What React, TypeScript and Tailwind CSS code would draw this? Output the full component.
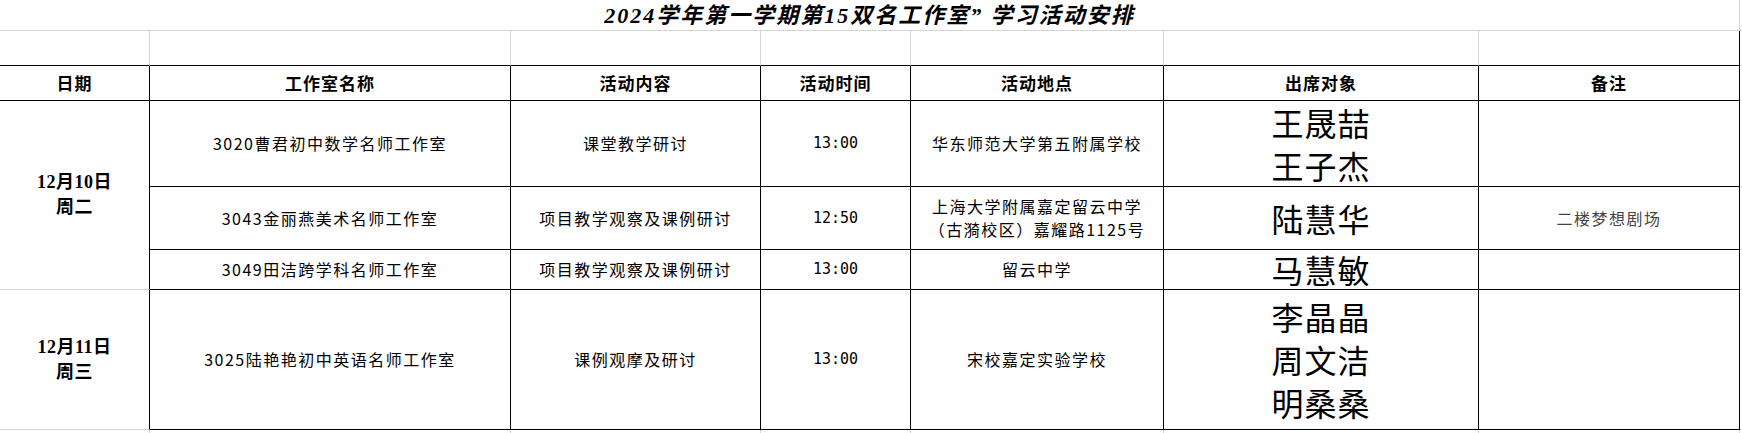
type Row = {
  name: string;
  content: string;
  time: string;
  place: string[];
  people: string[];
  note?: string;
};

const day1: Row[] = [
  {
    name: "3020曹君初中数学名师工作室",
    content: "课堂教学研讨",
    time: "13:00",
    place: ["华东师范大学第五附属学校"],
    people: ["王晟喆", "王子杰"],
  },
  {
    name: "3043金丽燕美术名师工作室",
    content: "项目教学观察及课例研讨",
    time: "12:50",
    place: ["上海大学附属嘉定留云中学", "（古漪校区）嘉耀路1125号"],
    people: ["陆慧华"],
    note: "二楼梦想剧场",
  },
  {
    name: "3049田洁跨学科名师工作室",
    content: "项目教学观察及课例研讨",
    time: "13:00",
    place: ["留云中学"],
    people: ["马慧敏"],
  },
];

const day2: Row = {
  name: "3025陆艳艳初中英语名师工作室",
  content: "课例观摩及研讨",
  time: "13:00",
  place: ["宋校嘉定实验学校"],
  people: ["李晶晶", "周文洁", "明桑桑"],
};

const headers = ["日期", "工作室名称", "活动内容", "活动时间", "活动地点", "出席对象", "备注"];

const cell = "flex flex-col items-center justify-center text-center border-r border-b border-black";
const body = "text-[16px] tracking-[1.5px] leading-[23px]";

function DataCells({ row }: { row: Row }) {
  return (
    <>
      <div className={`${cell} ${body}`}>{row.name}</div>
      <div className={`${cell} ${body}`}>{row.content}</div>
      <div className={`${cell} text-[15px] font-['DejaVu_Sans_Mono',monospace]`}>{row.time}</div>
      <div className={`${cell} ${body}`}>
        {row.place.map((p) => (
          <span key={p}>{p}</span>
        ))}
      </div>
      <div className={`${cell} text-[32px] leading-[43px] tracking-[1px]`}>
        {row.people.map((p) => (
          <span key={p}>{p}</span>
        ))}
      </div>
      <div className={`${cell} text-[16px] tracking-[1.5px] text-[#444]`}>{row.note}</div>
      <div className="border-b border-[#d4d4d4]" />
    </>
  );
}

export default function App() {
  return (
    <div className="w-[1742px] h-[433px] overflow-hidden bg-white text-black font-['Noto_Sans_CJK_SC',sans-serif]">
      <div className="grid grid-cols-[150px_361px_250px_150px_253px_315px_261px_2px] grid-rows-[31px_35px_35px_86px_63px_40px_140px_3px]">
        {/* title */}
        <div className="col-span-7 flex items-center justify-center border-r border-b border-[#d4d4d4] text-[22px] font-bold italic tracking-[2px] font-['Liberation_Serif','Noto_Sans_CJK_SC',serif]">
          2024学年第一学期第15双名工作室” 学习活动安排
        </div>
        <div className="border-b border-[#d4d4d4]" />

        {/* empty row */}
        <div className="border-r border-b border-r-[#d4d4d4] border-b-black" />
        <div className="border-r border-b border-r-[#d4d4d4] border-b-black" />
        <div className="border-r border-b border-r-[#d4d4d4] border-b-black" />
        <div className="border-r border-b border-r-[#d4d4d4] border-b-black" />
        <div className="border-r border-b border-r-[#d4d4d4] border-b-black" />
        <div className="border-r border-b border-r-[#d4d4d4] border-b-black" />
        <div className="border-r border-b border-black" />
        <div className="border-b border-[#d4d4d4]" />

        {/* header */}
        {headers.map((h) => (
          <div key={h} className={`${cell} text-[17px] font-bold tracking-[1px]`}>
            {h}
          </div>
        ))}
        <div className="border-b border-[#d4d4d4]" />

        {/* 12月10日 */}
        <div className="row-span-3 flex flex-col items-center justify-center border-r border-b border-r-black border-b-[#d4d4d4] text-[18px] font-bold leading-[25px] tracking-[0.5px] font-['Liberation_Serif','Noto_Sans_CJK_SC',serif]">
          <span>12月10日</span>
          <span>周二</span>
        </div>
        {day1.map((r) => (
          <DataCells key={r.name} row={r} />
        ))}

        {/* 12月11日 */}
        <div className="flex flex-col items-center justify-center border-r border-b border-r-black border-b-[#d4d4d4] text-[18px] font-bold leading-[25px] tracking-[0.5px] font-['Liberation_Serif','Noto_Sans_CJK_SC',serif]">
          <span>12月11日</span>
          <span>周三</span>
        </div>
        <DataCells row={day2} />

        {/* spill of the next grid row */}
        <div className="border-r border-[#d4d4d4]" />
        <div className="border-r border-[#d4d4d4]" />
        <div className="border-r border-[#d4d4d4]" />
        <div className="border-r border-[#d4d4d4]" />
        <div className="border-r border-[#d4d4d4]" />
        <div className="border-r border-[#d4d4d4]" />
        <div className="border-r border-[#d4d4d4]" />
        <div />
      </div>
    </div>
  );
}
